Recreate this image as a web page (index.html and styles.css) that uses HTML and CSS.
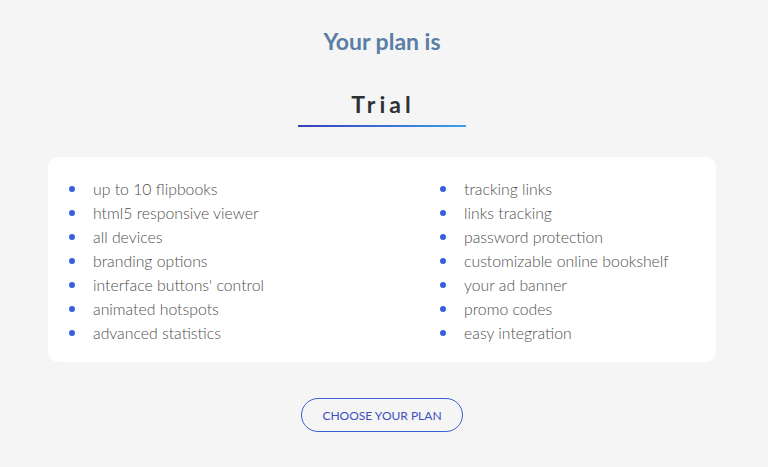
FILE: index.html
```html
<!DOCTYPE html>
<html>
<head>
<meta charset="utf-8">
<link rel="stylesheet" href="styles.css">
</head>
<body>
<div class="page">
  <h2 class="title">Your plan is</h2>
  <div class="plan">
    <div class="plan-name">Trial</div>
    <div class="plan-line"></div>
  </div>
  <div class="card">
    <ul class="list">
      <li>up to 10 flipbooks</li>
      <li>html5 responsive viewer</li>
      <li>all devices</li>
      <li>branding options</li>
      <li>interface buttons' control</li>
      <li>animated hotspots</li>
      <li>advanced statistics</li>
    </ul>
    <ul class="list">
      <li>tracking links</li>
      <li>links tracking</li>
      <li>password protection</li>
      <li>customizable online bookshelf</li>
      <li>your ad banner</li>
      <li>promo codes</li>
      <li>easy integration</li>
    </ul>
  </div>
  <div class="actions">
    <button class="btn">CHOOSE YOUR PLAN</button>
  </div>
</div>
</body>
</html>
```

FILE: styles.css
```css
html, body {
  margin: 0;
  padding: 0;
  background: #f5f5f5;
  font-family: Lato, "Open Sans", sans-serif;
}
.page {
  padding: 27px 52px 0 48px;
}
.title {
  margin: 0;
  text-align: center;
  font-size: 23px;
  line-height: 28px;
  font-weight: 700;
  color: #5a7ea6;
}
.plan {
  display: flex;
  flex-direction: column;
  align-items: center;
  margin-top: 35px;
}
.plan-name {
  font-size: 23px;
  line-height: 28px;
  font-weight: 700;
  letter-spacing: 4px;
  padding-left: 2px;
  color: #2f3035;
}
.plan-line {
  width: 168px;
  height: 2px;
  margin-top: 7px;
  background: linear-gradient(90deg, #3a3fb8, #3aa0ee);
}
.card {
  margin-top: 30px;
  background: #fff;
  border-radius: 10px;
  padding: 20px 24px 17px 24px;
  display: grid;
  grid-template-columns: 371px 1fr;
}
.list {
  list-style: none;
  margin: 0;
  padding: 0;
}
.list li {
  position: relative;
  padding-left: 21px;
  font-size: 15.8px;
  line-height: 24px;
  font-weight: 300;
  color: #4f4f4f;
}
.list li::before {
  content: "";
  position: absolute;
  left: -3px;
  top: 9px;
  width: 6px;
  height: 6px;
  border-radius: 50%;
  background: #3a5fd6;
}
.actions {
  display: flex;
  justify-content: center;
  margin-top: 36px;
}
.btn {
  width: 162px;
  height: 34px;
  border: 1px solid #3a5fd0;
  border-radius: 17px;
  background: transparent;
  font-family: Lato, sans-serif;
  font-size: 12px;
  font-weight: 400;
  color: #3b4fc0;
  padding: 0;
}
```
